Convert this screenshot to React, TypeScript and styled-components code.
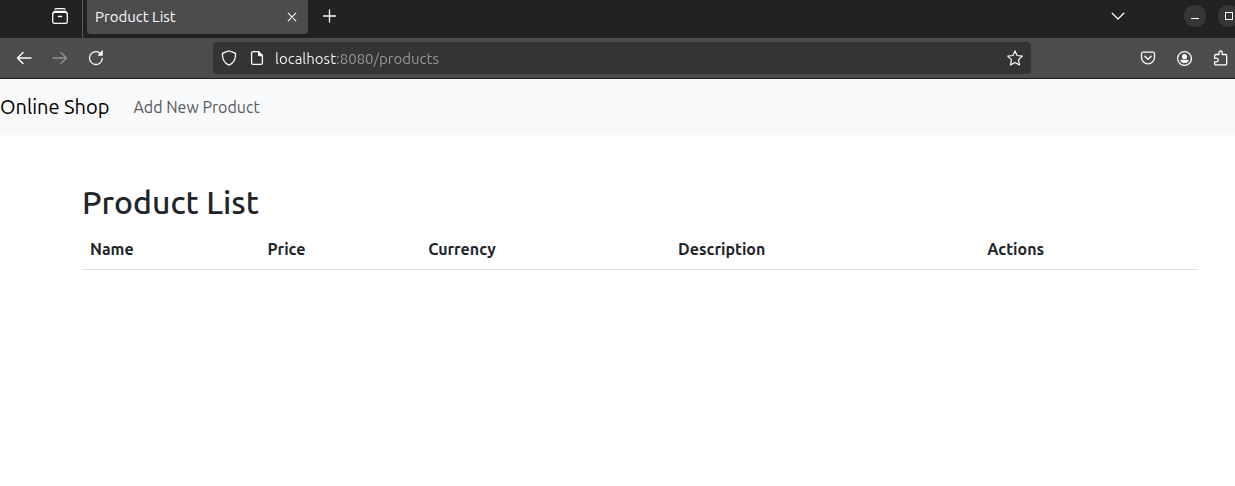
import React from "react";
import styled, { createGlobalStyle } from "styled-components";

const Global = createGlobalStyle`
  *, *::before, *::after { box-sizing: border-box; }
  body {
    margin: 0;
    background: #fff;
    color: #212529;
    font: 400 16px/24px Ubuntu, "Noto Sans", sans-serif;
    overflow-x: hidden;
  }
  button, input { font: inherit; }
`;

const Chrome = styled.header`
  overflow: hidden;
  border-bottom: 1px solid #1c1c1c;
  color: #fbfbfe;
`;

const TabStrip = styled.div`
  display: flex;
  height: 38px;
  margin-right: -5px;
  background: #222;
`;

const IconButton = styled.button<{ $w?: number; $dim?: boolean }>`
  display: flex;
  flex: none;
  align-items: center;
  justify-content: center;
  width: ${(p) => p.$w ?? 36}px;
  height: 32px;
  padding: 0;
  border: 0;
  background: none;
  color: ${(p) => (p.$dim ? "#929292" : "#fbfbfe")};
`;

const Pinned = styled.div`
  display: flex;
  justify-content: flex-end;
  flex: none;
  width: 83px;
  padding-right: 4px;
  border-right: 1px solid #5a5a5a;
`;

const Tab = styled.div`
  display: flex;
  align-items: center;
  flex: none;
  width: 221px;
  height: 34px;
  margin: 0 4px;
  padding-left: 8px;
  border-radius: 0 0 4px 4px;
  background: #4c4c4c;
  font-size: 15px;
`;

const TabTitle = styled.span`
  flex: 1;
`;

const Spacer = styled.div`
  flex: 1;
`;

const WindowControls = styled.div`
  display: flex;
  gap: 12px;
  padding-top: 5px;
  margin-left: 48px;
`;

const RoundButton = styled.button`
  display: flex;
  align-items: center;
  justify-content: center;
  width: 22px;
  height: 22px;
  padding: 0;
  border: 0;
  border-radius: 50%;
  background: #373737;
  color: #fff;
`;

const Toolbar = styled.div`
  display: flex;
  align-items: center;
  height: 40px;
  margin-right: -3px;
  padding-left: 6px;
  background: #4c4c4c;
`;

const AddressBar = styled.div`
  display: flex;
  align-items: center;
  flex: 1;
  height: 32px;
  margin: 0 99px;
  padding-left: 2px;
  border-radius: 4px;
  background: #343434;
`;

const AddressInput = styled.input`
  flex: 1;
  min-width: 0;
  height: 32px;
  margin-left: 4px;
  padding: 0;
  border: 0;
  outline: 0;
  font-size: 15px;
  color: transparent;
  background: linear-gradient(to right, #fbfbfe 61px, #9a9a9a 61px);
  background-clip: text;
  -webkit-background-clip: text;
`;

const Navbar = styled.nav`
  display: flex;
  align-items: center;
  gap: 24px;
  height: 56px;
  background: #f8f9fa;
`;

const Brand = styled.a`
  color: #000;
  font-size: 20px;
  line-height: 30px;
  text-decoration: none;
`;

const NavLink = styled.a`
  color: #595a5a;
  text-decoration: none;
`;

const Main = styled.main`
  padding: 48px 37px 48px 82px;
`;

const Title = styled.h1`
  margin: 0 0 8px;
  font-size: 32px;
  font-weight: 500;
  line-height: 38px;
`;

const Table = styled.table`
  width: 100%;
  border-collapse: collapse;
  table-layout: fixed;
`;

const Th = styled.th<{ $share: number }>`
  width: ${(p) => p.$share}%;
  padding: 8px;
  border-bottom: 1px solid #dee2e6;
  font-weight: 700;
  text-align: left;
`;

const Svg = ({ size = 16, children }: { size?: number; children: React.ReactNode }) => (
  <svg
    width={size}
    height={size}
    viewBox={`0 0 ${size} ${size}`}
    fill="none"
    stroke="currentColor"
    strokeWidth="1.3"
    strokeLinecap="round"
    strokeLinejoin="round"
    aria-hidden="true"
  >
    {children}
  </svg>
);

const columns = [
  { label: "Name", share: 15.9 },
  { label: "Price", share: 14.4 },
  { label: "Currency", share: 22.4 },
  { label: "Description", share: 27.7 },
  { label: "Actions", share: 19.6 },
];

export default function App() {
  return (
    <>
      <Global />
      <Chrome>
        <TabStrip>
          <Pinned>
            <IconButton aria-label="Firefox View">
              <Svg>
                <path d="M3 1.2C3.2.8 3.6.7 4 .7h8c.4 0 .8.1 1 .5" />
                <rect x=".7" y="4.4" width="14.6" height="11" rx="2" />
                <path d="M1 5.2C1.4 3.8 2 3.3 3 3.3h10c1 0 1.600.5 2 1.900M6.300 8.500h3.400" />
              </Svg>
            </IconButton>
          </Pinned>
          <Tab>
            <TabTitle>Product List</TabTitle>
            <IconButton $w={32} aria-label="Close tab">
              <Svg size={10}>
                <path strokeWidth="1.100" d="M1.200 1.200l7.600 7.600M8.800 1.200L1.200 8.800" />
              </Svg>
            </IconButton>
          </Tab>
          <IconButton $w={36} aria-label="New tab">
            <Svg size={14}>
              <path d="M6.500 1v12M.5 7h12" />
            </Svg>
          </IconButton>
          <Spacer />
          <IconButton $w={36} aria-label="List all tabs">
            <Svg size={14}>
              <path d="M1.200 4.300L7 10l5.800-5.700" />
            </Svg>
          </IconButton>
          <WindowControls>
            <RoundButton aria-label="Minimize">
              <Svg size={10}>
                <path strokeLinecap="butt" d="M1 7.500h8" strokeWidth="1" />
              </Svg>
            </RoundButton>
            <RoundButton aria-label="Maximize">
              <Svg size={10}>
                <rect x="1.500" y="1.500" width="7" height="7" strokeWidth="1" strokeLinejoin="miter" />
              </Svg>
            </RoundButton>
          </WindowControls>
        </TabStrip>
        <Toolbar>
          <IconButton aria-label="Back">
            <Svg>
              <path strokeWidth="1.500" d="M15 8H1.500M7 2.500L1.500 8 7 13.500" />
            </Svg>
          </IconButton>
          <IconButton $dim aria-label="Forward">
            <Svg>
              <path d="M1 8h13.500M9 2.500L14.500 8 9 13.500" />
            </Svg>
          </IconButton>
          <IconButton aria-label="Reload">
            <Svg>
              <path d="M14.300 8.300A6.400 6.400 0 1 1 11.800 3" />
              <path fill="currentColor" stroke="none" d="M14.800.9v4.300c0 .3-.2.500-.5.500h-3.900c-.5 0-.7-.5-.4-.8L14 .6c.3-.3.8-.1.800.3z" />
            </Svg>
          </IconButton>
          <AddressBar>
            <IconButton $w={28} aria-label="Tracking protection">
              <Svg>
                <path d="M8 .8c.3 0 5.300 1.900 6 2.300.4.200.6.500.6.900 0 5.500-1.500 9-6.600 11.200C2.900 13 1.400 9.500 1.400 4c0-.4.200-.7.600-.9C2.700 2.700 7.700.8 8 .8z" />
              </Svg>
            </IconButton>
            <IconButton $w={28} aria-label="Site information">
              <Svg>
                <path d="M9.500 1.600H4A1.400 1.400 0 0 0 2.600 3v10A1.400 1.400 0 0 0 4 14.400h8a1.400 1.400 0 0 0 1.400-1.400V5.600z" />
                <path fill="currentColor" stroke="none" d="M9 1.200h.9L14 5.300v.9h-4a1 1 0 0 1-1-1z" />
              </Svg>
            </IconButton>
            <AddressInput aria-label="Address" defaultValue="localhost:8080/products" />
            <IconButton $w={32} aria-label="Bookmark this page">
              <Svg>
                <path strokeWidth="1.200" d="M8 .9l2.100 4.600 5.200.6-3.800 3.500 1 5.300L8 12.400 3.500 14.900l1-5.300L.7 6.100l5.200-.6z" />
              </Svg>
            </IconButton>
          </AddressBar>
          <IconButton aria-label="Save to Pocket">
            <Svg>
              <path d="M3 2.200h10a1.500 1.500 0 0 1 1.500 1.500v3.800a6.500 6.300 0 0 1-13 0V3.700A1.500 1.500 0 0 1 3 2.200z" />
              <path d="M4.800 6.300L8 9.300l3.200-3" />
            </Svg>
          </IconButton>
          <IconButton aria-label="Account">
            <Svg>
              <circle cx="8.500" cy="8.500" r="6.900" />
              <circle cx="8.500" cy="6.500" r="2.600" fill="currentColor" stroke="none" />
              <path fill="currentColor" stroke="none" d="M5 9.800h7c.5 0 .8.400.6.900-.7 1.600-2.200 2.400-4.100 2.400s-3.400-.8-4.100-2.400c-.2-.5.100-.9.600-.9z" />
            </Svg>
          </IconButton>
          <IconButton aria-label="Extensions">
            <Svg>
              <path d="M7 4.500V2.600a1.600 1.600 0 0 1 3.200 0v1.900h3.300c.7 0 1.200.5 1.200 1.200v8c0 .7-.5 1.200-1.200 1.200H3.800c-.7 0-1.200-.5-1.200-1.200v-1.900h2a1.700 1.700 0 0 0 0-3.400h-2V5.700c0-.7.5-1.200 1.200-1.200z" />
            </Svg>
          </IconButton>
        </Toolbar>
      </Chrome>
      <Navbar>
        <Brand href="#">Online Shop</Brand>
        <NavLink href="#">Add New Product</NavLink>
      </Navbar>
      <Main>
        <Title>Product List</Title>
        <Table>
          <thead>
            <tr>
              {columns.map((c) => (
                <Th key={c.label} scope="col" $share={c.share}>
                  {c.label}
                </Th>
              ))}
            </tr>
          </thead>
        </Table>
      </Main>
    </>
  );
}
